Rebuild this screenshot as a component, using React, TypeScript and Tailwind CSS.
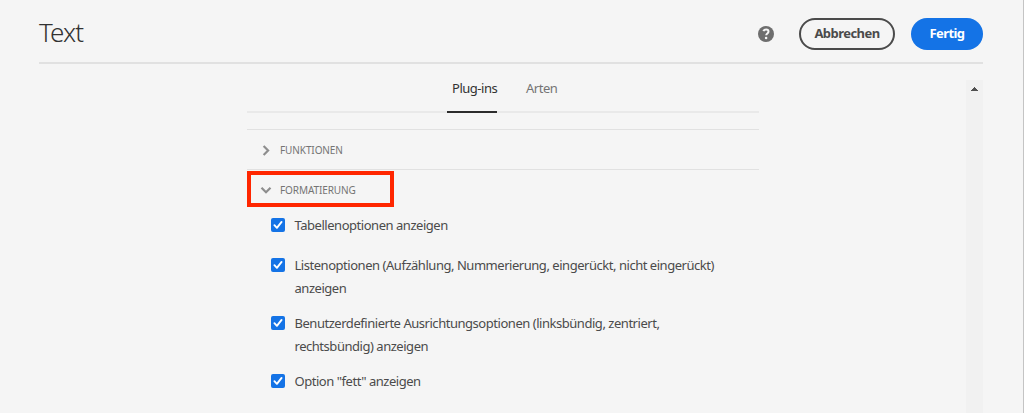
import React from "react";

type Option = { lines: string[]; margin: string };

const options: Option[] = [
  { lines: ["Tabellenoptionen anzeigen"], margin: "mb-[17px]" },
  {
    lines: ["Listenoptionen (Aufzählung, Nummerierung, eingerückt, nicht eingerückt)", "anzeigen"],
    margin: "mb-3",
  },
  {
    lines: ["Benutzerdefinierte Ausrichtungsoptionen (linksbündig, zentriert,", "rechtsbündig) anzeigen"],
    margin: "mb-3",
  },
  { lines: ['Option "fett" anzeigen'], margin: "" },
];

function Checkbox() {
  return (
    <span className="mt-1 flex size-3.5 shrink-0 items-center justify-center rounded-[2px] bg-[#1473e6]">
      <svg width="10" height="10" viewBox="0 0 10 10" fill="none">
        <path d="M1.4 5.2 3.9 7.8 8.6 1.9" stroke="#fff" strokeWidth="1.9" strokeLinecap="round" strokeLinejoin="round" />
      </svg>
    </span>
  );
}

function Chevron({ open }: { open?: boolean }) {
  return (
    <svg width="12" height="12" viewBox="0 0 12 12" fill="none" stroke="#8e8e8e" strokeWidth="2.2">
      <path d={open ? "M1.5 3.7 6 8.2l4.5-4.5" : "M3.6 1 8.1 5.5l-4.5 4.5"} />
    </svg>
  );
}

export default function App() {
  return (
    <div className="flex h-[413px] w-[1024px] flex-col overflow-hidden border-r border-[#c4c4c4] bg-[#f5f5f5] pr-10 pl-[39px] font-['Noto_Sans',sans-serif] text-[13px] text-[#4b4b4b]">
      <header className="flex h-16 shrink-0 items-start border-b-2 border-[#e1e1e1] pt-[18px]">
        <h1 className="-mt-px text-[26px] leading-[30px] font-light tracking-[-0.9px] text-[#323232]">Text</h1>
        <svg className="mt-2 mr-[25px] ml-auto" width="16" height="16" viewBox="0 0 16 16">
          <circle cx="8" cy="8" r="8" fill="#6e6e6e" />
          <path d="M5.4 5.2C5.9 4 6.9 3.5 8.1 3.5c1.4 0 2.4.8 2.4 2 0 1.9-2.3 1.9-2.3 3.8" fill="none" stroke="#f5f5f5" strokeWidth="2" />
          <circle cx="8.1" cy="12" r="1.3" fill="#f5f5f5" />
        </svg>
        <button className="h-8 w-24 rounded-full border-2 border-[#4b4b4b] pb-0.5 text-[13px] leading-none font-bold tracking-[-0.55px] whitespace-nowrap">
          Abbrechen
        </button>
        <button className="ml-4 h-8 w-[72px] rounded-full bg-[#1473e6] pb-0.5 text-[13px] leading-none font-bold tracking-[-0.6px] text-white">
          Fertig
        </button>
      </header>
      <div className="flex grow pt-4">
        <main className="ml-[208px] w-[512px]">
          <nav className="flex h-[33px] border-b-2 border-[#e9e9e9] pl-[200px] leading-4 tracking-[-0.48px]">
            <span className="h-[33px] w-[50px] border-b-2 border-[#2c2c2c] pl-[5px] whitespace-nowrap text-[#323232]">Plug-ins</span>
            <span className="ml-[29px] text-[#747474]">Arten</span>
          </nav>
          <section className="mt-4 flex h-10 items-center gap-2 border-t border-[#e1e1e1] pt-0.5 pl-[13px] text-[10px] tracking-[-0.1px] text-[#747474]">
            <Chevron />
            <span>FUNKTIONEN</span>
          </section>
          <section className="border-t border-[#e1e1e1] pt-px">
            <div className="flex h-9 w-[147px] items-center gap-2 border-4 border-[#ff2600] pt-0.5 pl-[9px] text-[10px] tracking-[-0.1px] text-[#747474]">
              <Chevron open />
              <span>FORMATIERUNG</span>
            </div>
            <div className="mt-[7px] ml-6">
              {options.map((o) => (
                <label key={o.lines[0]} className={`flex gap-[9.5px] leading-[23px] tracking-[-0.465px] whitespace-nowrap ${o.margin}`}>
                  <Checkbox />
                  <span>
                    {o.lines.map((line) => (
                      <span key={line} className="block">{line}</span>
                    ))}
                  </span>
                </label>
              ))}
            </div>
          </section>
        </main>
        <aside className="ml-auto flex w-[17px] justify-center bg-[#f1f1f1] pt-[7px]">
          <svg width="7" height="4" viewBox="0 0 7 4" shapeRendering="crispEdges">
            <path d="M3 0h1v1h1v1h1v1h1v1H0V3h1V2h1V1h1z" fill="#505050" />
          </svg>
        </aside>
      </div>
    </div>
  );
}
